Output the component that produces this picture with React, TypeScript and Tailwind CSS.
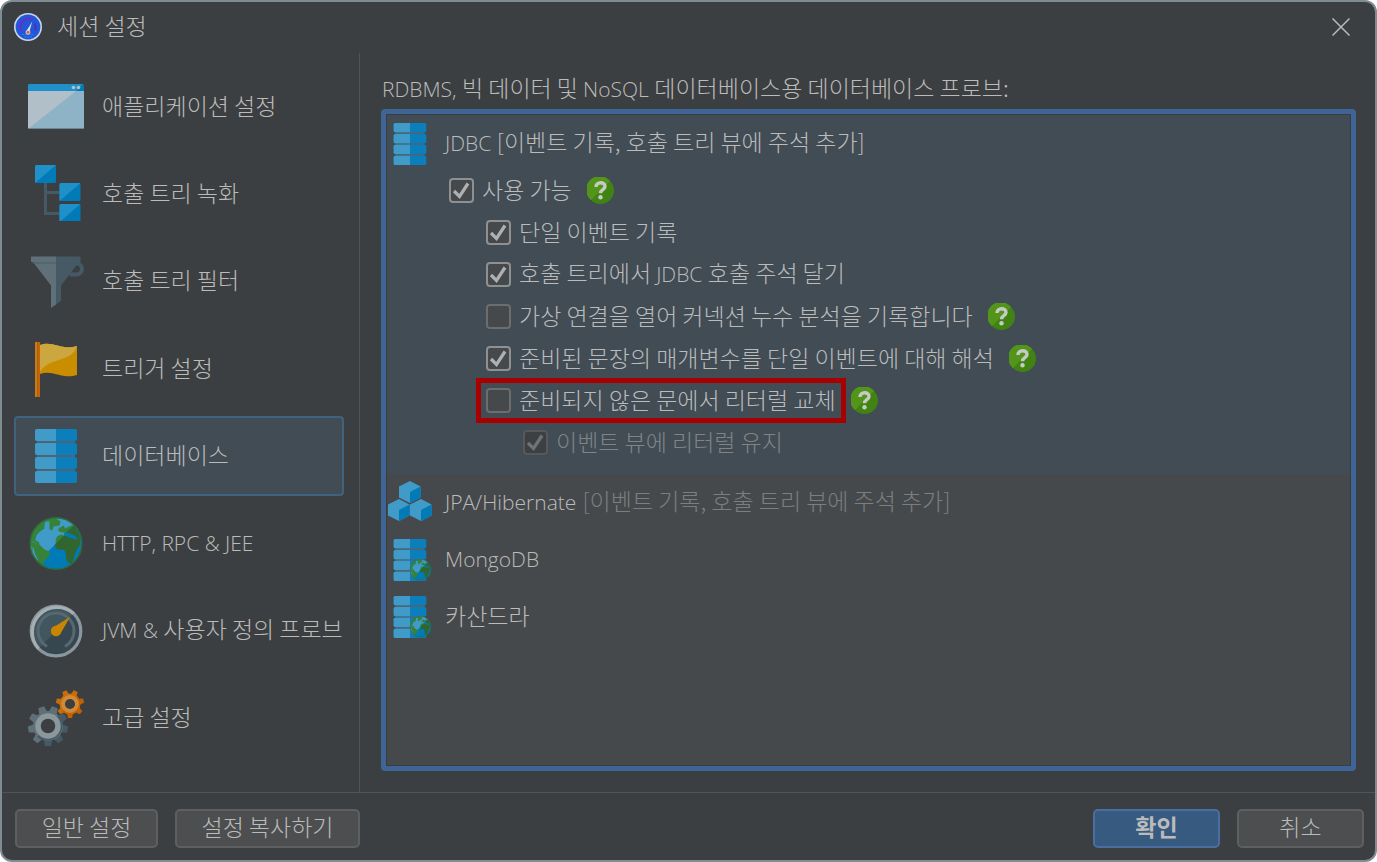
import { useState } from "react";
import type { ReactNode } from "react";

const LATIN = /([A-Za-z][A-Za-z/&, ]*)/;

// Latin runs are set smaller than hangul so both share one cap height
function Txt({ children }: { children: string }) {
  return (
    <span className="block pb-[2px] leading-[23px] whitespace-pre">
      {children.split(LATIN).map((part, i) =>
        LATIN.test(part) ? (
          <span key={i} className="font-['Open_Sans'] text-[21px] font-[360]">
            {part}
          </span>
        ) : (
          part
        )
      )}
    </span>
  );
}

function LogoIcon() {
  return (
    <svg viewBox="0 0 28 28" className="size-7 shrink-0">
      <circle cx="14" cy="14" r="14" fill="#c9d6ea" />
      <circle cx="14" cy="14" r="12.4" fill="#2157d8" />
      <path d="M7 17.500a8 8 0 0 1 1.500-9 8 8 0 0 1 10.500-1.500" fill="none" stroke="#6a2fc4" strokeWidth="2" />
      <path d="M20.500 10.500a8 8 0 0 1 .5 7" fill="none" stroke="#4a35b8" strokeWidth="2" />
      <path d="M8 21.500h12M10 24h8" stroke="#2f86d8" strokeWidth="1.200" strokeDasharray="2 1" />
      <path d="M18.300 8.500 12.200 18.500l2.800 1.300z" fill="#e3e6ee" />
      <circle cx="14" cy="19.300" r="2" fill="#d8604c" stroke="#e3e6ee" strokeWidth="0.800" />
    </svg>
  );
}

function WindowIcon() {
  return (
    <svg viewBox="0 0 56 45" className="h-[45px] w-14">
      <path d="M0 7v38h56V7z" fill="#8eb3c6" />
      <path d="M0 7h48L0 45z" fill="#b1c0c8" />
      <path d="M0 44.500h56" stroke="#6c8794" strokeWidth="1" />
      <path d="M0 7V1.500q0-1.500 1.500-1.500h53q1.500 0 1.500 1.500V7z" fill="#007bb8" />
      <path d="M0 7V1.500q0-1.500 1.500-1.500H55L48 7z" fill="#2091c8" />
      <circle cx="45.500" cy="3.500" r="1.800" fill="#b1c0c8" />
      <circle cx="50.500" cy="3.500" r="1.800" fill="#b1c0c8" />
    </svg>
  );
}

function TreeIcon() {
  return (
    <svg viewBox="0 0 56 56" className="size-14">
      <path d="M17.500 17v31.500H32M17.500 27.500H32" fill="none" stroke="#455a64" strokeWidth="3" />
      {[
        [7, 0],
        [31.5, 18],
        [31.5, 39],
      ].map(([x, y]) => (
        <g key={y} transform={`translate(${x} ${y})`}>
          <rect width="21" height="18" rx="1.500" fill="#007bb8" />
          <path d="M0 18V1.500Q0 0 1.500 0H21z" fill="#2091c8" />
        </g>
      ))}
    </svg>
  );
}

function FilterIcon() {
  return (
    <svg viewBox="0 -2 56 56" className="size-14">
      <path d="M46 8.500h2.500a5.500 5.500 0 0 1 0 11h-7" fill="none" stroke="#455a64" strokeWidth="4" />
      <path d="M28 1.500h24.500V7h-1.500L33 30.500V46l-5 3.500z" fill="#455a64" />
      <path d="M3 1.500h25v48l-5 3.500V30.500L5 7H3z" fill="#607078" />
      <path d="M4.500 8h45" stroke="#4a5a63" strokeWidth="1" />
    </svg>
  );
}

function FlagIcon() {
  return (
    <svg viewBox="0 -3 56 58" className="h-[58px] w-14">
      <path d="M12 3c13-5 22 6 37 1v29c-15 5-24-6-37-1z" fill="#ca8d00" />
      <path d="M12 3c13-5 22 6 37 1-5 17-29 11-37 26z" fill="#cca63e" />
      <path d="M7 0h2.500v55H7z" fill="#cc7a14" />
      <path d="M9.500 0H12v55H9.500z" fill="#c46508" />
    </svg>
  );
}

function ServerShape() {
  return (
    <>
      <path d="M9 4h38v46H9z" fill="#4d6476" />
      {[0, 14, 28, 42].map((y) => (
        <g key={y}>
          <rect x="7" y={y} width="42" height="12" rx="2" fill="#0a7fbc" />
          <path d={`M28 ${y}H9q-2 0-2 2v8q0 2 2 2h19z`} fill="#419bc8" />
        </g>
      ))}
    </>
  );
}

function DatabaseIcon({ className = "size-14" }: { className?: string }) {
  return (
    <svg viewBox="0 0 56 54" className={className}>
      <ServerShape />
    </svg>
  );
}

function GlobeShape() {
  return (
    <>
      <circle cx="28" cy="28" r="26" fill="#007bb8" />
      <path d="M46.400 9.600A26 26 0 1 0 9.600 46.400z" fill="#419bc8" />
      <path
        d="M28 2A26 26 0 0 0 2.500 25l8 4 1-2-4-2c0-6 4-9 9-12V9l1-3h4v8l3 1 1-4 6-1 1-4-3-2z"
        fill="#358238"
      />
      <path d="M2.500 25c2 3 6 2 9 4l5 5 5 2 .500 3-6 7-1 3 1.500 3c-4-2-8-5-9.500-9L5 37 3 29z" fill="#358238" />
      <path d="M4.500 32 5 38l4 7h1.500L7 38l-1.500-6z" fill="#419bc8" />
      <path d="M31 12.500 36 10l1 3 5-2.500 4-1-8 8-6-1-2-1.500z" fill="#358238" />
      <path d="M29 21l4-2 3 1-4 5-4 4-.500-4z" fill="#358238" />
      <path d="M46 9.500 38 17l4 3h5l3 4-6-1-5-2-3-1-9 9c0 5 4 6 9 5l2 4v5l2 4 4 1 2-7 3-7 3-5V23a26 26 0 0 0-7-13.500z" fill="#316630" />
      <path d="M36 17.500l3-.500 5 2 2 1-1 1.500-5-1.500-4-1z" fill="#007bb8" />
      <circle cx="28" cy="28" r="25.800" fill="none" stroke="#316a37" strokeWidth="1.500" />
    </>
  );
}

function GlobeIcon() {
  return (
    <svg viewBox="0 0 56 55" className="size-14">
      <GlobeShape />
    </svg>
  );
}

function WebDatabaseIcon() {
  return (
    <svg viewBox="0 0 56 54" className="h-[42px] w-11">
      <ServerShape />
      <g transform="translate(27 25) scale(.52)">
        <GlobeShape />
      </g>
    </svg>
  );
}

function CubesIcon() {
  return (
    <svg viewBox="0 0 44 44" className="size-11">
      {[
        [11, 0],
        [0, 18],
        [22, 18],
      ].map(([x, y]) => (
        <g key={x} transform={`translate(${x} ${y})`}>
          <path d="M11 0 21.500 5.500v11L11 22 0 16.500v-11z" fill="#419bc8" />
          <path d="M21.500 5.500v11L11 22V11z" fill="#007bb8" />
        </g>
      ))}
    </svg>
  );
}

function GaugeIcon() {
  return (
    <svg viewBox="0 0 56 56" className="size-14">
      <circle cx="28" cy="28" r="25" fill="#42565f" />
      <path d="M45.700 10.300A25 25 0 0 1 10.300 45.700z" fill="#36474f" />
      <circle cx="28" cy="28" r="24.800" fill="none" stroke="#8a979d" strokeWidth="3.200" />
      <path d="M10.500 45.500A24.800 24.800 0 0 1 45.500 10.500" fill="none" stroke="#a5aeb1" strokeWidth="3.200" />
      <path d="M19 43.500a18 18 0 1 1 18 0" fill="none" stroke="#566971" strokeWidth="3" />
      <path d="M42 14 32 31.500 25 24.500z" fill="#c98500" />
      <circle cx="28" cy="28" r="5.200" fill="#c98500" />
    </svg>
  );
}

function Gear({ teeth, light, dark, ring }: { teeth: number[]; light: string; dark: string; ring: string }) {
  return (
    <>
      {teeth.map((a) => (
        <path key={a} d="M-4.500-12-3-20H3l1.500 8z" transform={`rotate(${a})`} fill={a > 30 && a < 200 ? dark : light} />
      ))}
      <circle r="12.500" fill="none" stroke={light} strokeWidth="5" />
      <path d="M9.500-9.500A13.500 13.500 0 0 1-9.500 9.500" fill="none" stroke={dark} strokeWidth="4" />
      <circle r="10" fill="none" stroke={ring} strokeWidth="5.500" />
    </>
  );
}

function GearsIcon() {
  return (
    <svg viewBox="0 0 56 56" className="size-14">
      <g transform="translate(20 36)">
        <Gear teeth={[20, 60, 100, 140, 180, 220, 260, 300, 340]} light="#607078" dark="#455a64" ring="#8a979d" />
      </g>
      <g transform="translate(42 14) scale(.7)">
        <Gear teeth={[24, 76, 128, 180, 232, 284, 336]} light="#c86d0a" dark="#c06000" ring="#d18a35" />
      </g>
    </svg>
  );
}

function HelpButton() {
  return (
    <button type="button" aria-label="도움말" className="shrink-0 cursor-pointer">
      <svg viewBox="0 0 27 27" className="size-[27px]">
        <circle cx="13.500" cy="13.500" r="13.500" fill="#418312" />
        <path d="M23 4A13.500 13.500 0 1 0 4 23z" fill="#52951a" />
        <path d="M9 10c0-5.500 9-5.500 9-.5 0 3.200-4.500 3.200-4.500 6.700" fill="none" stroke="#c6cac4" strokeWidth="3.400" />
        <circle cx="13.500" cy="20.300" r="2.200" fill="#c6cac4" />
      </svg>
    </button>
  );
}

const NAV: { label: string; icon: ReactNode }[] = [
  { label: "애플리케이션 설정", icon: <WindowIcon /> },
  { label: "호출 트리 녹화", icon: <TreeIcon /> },
  { label: "호출 트리 필터", icon: <FilterIcon /> },
  { label: "트리거 설정", icon: <FlagIcon /> },
  { label: "데이터베이스", icon: <DatabaseIcon className="h-[54px] w-14" /> },
  { label: "HTTP, RPC & JEE", icon: <GlobeIcon /> },
  { label: "JVM & 사용자 정의 프로브", icon: <GaugeIcon /> },
  { label: "고급 설정", icon: <GearsIcon /> },
];

type Option = {
  label: string;
  indent: string;
  checked: boolean;
  help?: boolean;
  disabled?: boolean;
  marked?: boolean;
};

const OPTIONS: Option[] = [
  { label: "사용 가능", indent: "pl-[62px]", checked: true, help: true },
  { label: "단일 이벤트 기록", indent: "pl-[99px]", checked: true },
  { label: "호출 트리에서 JDBC 호출 주석 달기", indent: "pl-[99px]", checked: true },
  { label: "가상 연결을 열어 커넥션 누수 분석을 기록합니다", indent: "pl-[99px]", checked: false, help: true },
  { label: "준비된 문장의 매개변수를 단일 이벤트에 대해 해석", indent: "pl-[99px]", checked: true, help: true },
  { label: "준비되지 않은 문에서 리터럴 교체", indent: "pl-[99px]", checked: false, help: true, marked: true },
  { label: "이벤트 뷰에 리터럴 유지", indent: "pl-[136px]", checked: true, disabled: true },
];

function OptionRow({ option }: { option: Option }) {
  const [checked, setChecked] = useState(option.checked);
  return (
    <div className={`flex h-[42px] items-center gap-[15px] ${option.indent}`}>
      <label
        className={`flex h-[25px] items-center gap-2 ${option.disabled ? "text-[#808487]" : ""} ${
          option.marked ? "outline-5 outline-offset-5 outline-[#a80000]" : ""
        }`}
      >
        <span className="grid size-[25px] shrink-0 place-items-center">
          <input
            type="checkbox"
            checked={checked}
            disabled={option.disabled}
            onChange={(e) => setChecked(e.target.checked)}
            className="col-start-1 row-start-1 size-[25px] appearance-none rounded-[4px] border-2 border-[#6b6d6f] bg-[#46494b] checked:border-[#8e9092] disabled:border-[#56595b] disabled:bg-[#3d4042]"
          />
          {checked && (
            <svg viewBox="0 0 25 25" className="pointer-events-none col-start-1 row-start-1 size-[25px]">
              <path
                d="M5 13 10.500 18.500 19 5.500"
                fill="none"
                stroke={option.disabled ? "#6f7375" : "#aeb0b1"}
                strokeWidth="3.200"
              />
            </svg>
          )}
        </span>
        <Txt>{option.label}</Txt>
      </label>
      {option.help && <HelpButton />}
    </div>
  );
}

const DATABASES: { label: string; note?: string; icon: ReactNode }[] = [
  { label: "JPA/Hibernate", note: "[이벤트 기록, 호출 트리 뷰에 주석 추가]", icon: <CubesIcon /> },
  { label: "MongoDB", icon: <WebDatabaseIcon /> },
  { label: "카산드라", icon: <WebDatabaseIcon /> },
];

function FooterButton({ children, wide, primary }: { children: string; wide?: string; primary?: boolean }) {
  return (
    <button
      type="button"
      className={`h-[39px] cursor-pointer rounded-[5px] border-2 pb-[3px] ${wide ?? "w-[127px]"} ${
        primary ? "border-[#4a6f9e] bg-[#365a80] font-bold" : "border-[#5d5f61] bg-[#4c4e50]"
      }`}
    >
      {children}
    </button>
  );
}

export default function App() {
  const [active, setActive] = useState("데이터베이스");

  return (
    <div className="flex min-h-screen flex-col rounded-xl border-2 border-[#7f8c92] bg-[#3c3f41] font-['Noto_Sans_CJK_KR',sans-serif] text-[23px] leading-[25px] font-light text-[#bbbbbb]">
      <header className="flex h-[51px] items-center gap-[15px] pr-6 pb-[2px] pl-3">
        <LogoIcon />
        <h1 className="flex-1">
          <Txt>세션 설정</Txt>
        </h1>
        <button type="button" aria-label="닫기" className="cursor-pointer">
          <svg viewBox="0 0 20 20" className="size-5" fill="none" stroke="#bbbbbb" strokeWidth="1.500">
            <path d="M1.500 1.500l17 17M18.500 1.500l-17 17" />
          </svg>
        </button>
      </header>

      <div className="flex flex-1">
        <nav className="flex w-[358px] shrink-0 flex-col justify-between border-r border-[#515456] pt-[13px] pr-[15px] pb-[34px] pl-3">
          {NAV.map((item) => (
            <button
              key={item.label}
              type="button"
              onClick={() => setActive(item.label)}
              className={`flex h-20 w-full cursor-pointer items-center gap-[18px] rounded-[4px] border-2 px-3 text-left ${
                active === item.label ? "border-[#40627c] bg-[#414c55]" : "border-transparent"
              }`}
            >
              <span className="w-14 shrink-0">{item.icon}</span>
              <Txt>{item.label}</Txt>
            </button>
          ))}
        </nav>

        <main className="flex min-w-0 flex-1 flex-col pt-[23px] pr-[19px] pb-[21px] pl-[21px]">
          <h2 className="h-[33px] pl-px">
            <Txt>RDBMS, 빅 데이터 및 NoSQL 데이터베이스용 데이터베이스 프로브:</Txt>
          </h2>
          <div className="flex-1 rounded-[4px] border-5 border-[#3e6596] bg-[#46494b]">
            <div className="h-full border border-[#3a3d40]">
              <section className="bg-[#414c55] pb-[11px]">
                <div className="flex h-[54px] items-center gap-[13px] pt-[3px] pl-px">
                  <DatabaseIcon className="h-[42px] w-11" />
                  <Txt>JDBC [이벤트 기록, 호출 트리 뷰에 주석 추가]</Txt>
                </div>
                {OPTIONS.map((option) => (
                  <OptionRow key={option.label} option={option} />
                ))}
              </section>
              {DATABASES.map((db) => (
                <div key={db.label} className="flex h-[57px] items-center gap-[13px] pl-px">
                  {db.icon}
                  <span className="flex gap-[6px]">
                    <Txt>{db.label}</Txt>
                    {db.note && (
                      <span className="text-[#7c7e80]">
                        <Txt>{db.note}</Txt>
                      </span>
                    )}
                  </span>
                </div>
              ))}
            </div>
          </div>
        </main>
      </div>

      <footer className="flex h-[68px] items-center gap-[17px] border-t border-[#515456] pt-[3px] pr-[11px] pl-[13px]">
        <FooterButton wide="w-[143px]">일반 설정</FooterButton>
        <FooterButton wide="w-[185px]">설정 복사하기</FooterButton>
        <span className="flex-1" />
        <FooterButton primary>확인</FooterButton>
        <FooterButton>취소</FooterButton>
      </footer>
    </div>
  );
}
